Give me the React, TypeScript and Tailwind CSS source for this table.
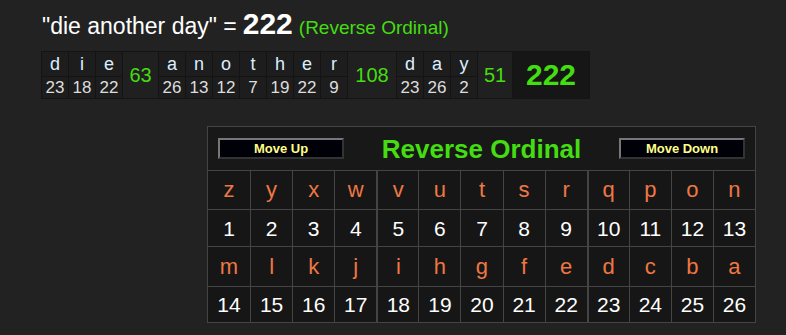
const PHRASE = ['die', 'another', 'day']

const rev = (c: string) => 27 - (c.charCodeAt(0) - 96)

const SUM_W: Record<string, string> = {
  die: 'w-[35px]',
  another: 'w-[48px]',
  day: 'w-[34px]',
}

const ROWS = [
  'zyxwvutsrqpon'.split(''),
  'mlkjihgfedcba'.split(''),
]

function MoveButton({ label }: { label: string }) {
  return (
    <button className="w-[126px] h-[21px] bg-[#000008] border-2 border-t-[#777] border-l-[#777] border-b-[#333] border-r-[#333] text-[13px] font-bold text-[#ffff88] leading-none">
      {label}
    </button>
  )
}

export default function App() {
  const total = PHRASE.reduce((s, w) => s + w.split('').reduce((a, c) => a + rev(c), 0), 0)

  return (
    <div className="min-h-[335px] bg-[#222] font-['Liberation_Sans',Arial,sans-serif] pt-[9px]">
      <div className="ml-[42px] h-[30px] flex items-baseline gap-[6px] text-[23px] leading-[30px] text-white">
        <span>"{PHRASE.join(' ')}" =</span>
        <span className="text-[30px] font-bold">{total}</span>
        <span className="text-[19px] text-[#44dd11]">(Reverse Ordinal)</span>
      </div>

      {/* breakdown */}
      <table className="ml-[41px] mt-[12px] border-separate border-spacing-[1px] bg-[#141414]">
        <tbody>
          <tr>
            {PHRASE.map((w) => [
              ...w.split('').map((c, i) => (
                <td key={w + i} className="w-[26px] h-[24px] bg-[#1d1d1d] text-center text-[18px] leading-none text-[#ddeeff]">
                  {c}
                </td>
              )),
              <td key={w + 's'} rowSpan={2} className={`${SUM_W[w]} bg-[#202020] text-center text-[20px] leading-none text-[#44dd11]`}>
                {w.split('').reduce((a, c) => a + rev(c), 0)}
              </td>,
            ])}
            <td rowSpan={2} className="w-[76px] bg-[#161616] text-center text-[30px] leading-none font-bold text-[#44dd11]">
              {total}
            </td>
          </tr>
          <tr>
            {PHRASE.map((w) =>
              w.split('').map((c, i) => (
                <td key={w + i} className="h-[21px] bg-[#1d1d1d] text-center text-[17px] leading-none text-[#dddddd]">
                  {rev(c)}
                </td>
              ))
            )}
          </tr>
        </tbody>
      </table>

      {/* cipher panel */}
      <div className="ml-[207px] mt-[27px] w-[549px] border border-[#444] bg-[#181818]">
        <div className="h-[44px] flex items-center justify-between px-[10px] border-b border-[#444]">
          <MoveButton label="Move Up" />
          <span className="text-[26px] leading-none font-bold text-[#44dd11]">Reverse Ordinal</span>
          <MoveButton label="Move Down" />
        </div>
        {ROWS.map((row, r) => (
          <div key={r}>
            <div className={`grid grid-cols-13 border-b border-[#444] ${r === 1 ? 'h-[40px]' : 'h-[39px]'}`}>
              {row.map((c, i) => (
                <div
                  key={c}
                  className={`flex items-center justify-center text-[22px] leading-none text-[#ee7744] bg-[#161616] ${i === 0 ? '' : i === 4 || i === 9 ? 'border-l-2 border-[#444]' : 'border-l border-[#444]'}`}
                >
                  {c}
                </div>
              ))}
            </div>
            <div className={`grid grid-cols-13 ${r === 0 ? 'h-[37px] border-b border-[#444]' : 'h-[35px]'}`}>
              {row.map((c, i) => (
                <div
                  key={c}
                  className={`flex items-center justify-center text-[21px] leading-none text-white bg-[#161616] ${i === 0 ? '' : i === 4 || i === 9 ? 'border-l-2 border-[#444]' : 'border-l border-[#444]'}`}
                >
                  {rev(c)}
                </div>
              ))}
            </div>
          </div>
        ))}
      </div>
    </div>
  )
}
